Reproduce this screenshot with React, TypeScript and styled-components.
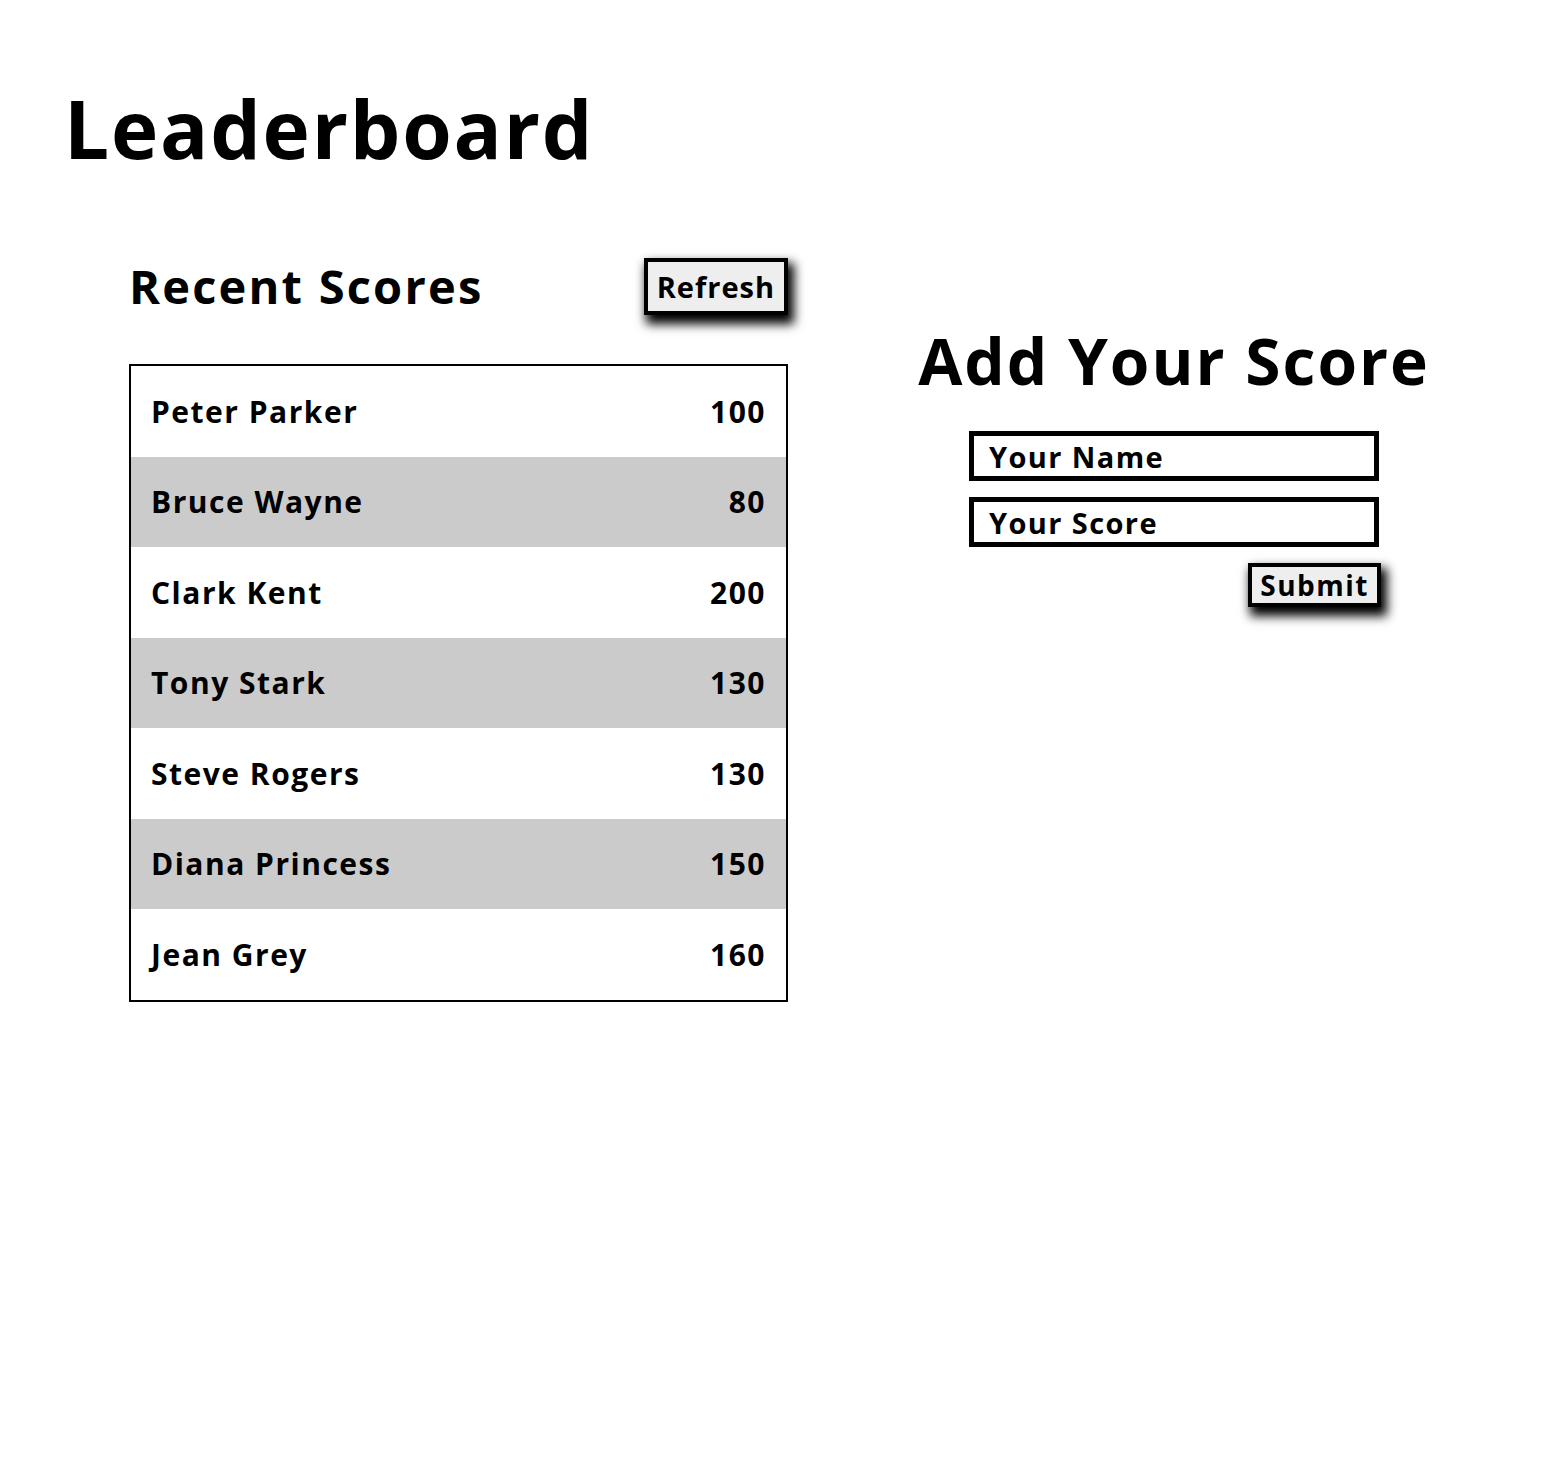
import styled, { createGlobalStyle } from 'styled-components';

const GlobalStyle = createGlobalStyle`
  body {
    margin: 0;
    background: #fff;
    color: #000;
    font-family: 'Open Sans', 'DejaVu Sans', sans-serif;
  }
`;

const Page = styled.div`
  padding: 78px 0 0 64px;
  min-height: 1460px;
  box-sizing: border-box;
`;

const Title = styled.h1`
  margin: 0;
  font-size: 80px;
  line-height: 100px;
  font-weight: 700;
  letter-spacing: 1.8px;
`;

const Columns = styled.div`
  display: flex;
  align-items: flex-start;
  margin-top: 78px;
`;

const ScoresColumn = styled.section`
  width: 659px;
  margin-left: 65px;
`;

const ScoresHeader = styled.div`
  display: flex;
  justify-content: space-between;
  align-items: center;
`;

const SubTitle = styled.h2`
  margin: 0;
  font-size: 47px;
  line-height: 60px;
  font-weight: 700;
  letter-spacing: 2.2px;
`;

const ShadowButton = styled.button<{ $size: 'big' | 'small' }>`
  font-family: inherit;
  font-weight: 700;
  font-size: ${(p) => (p.$size === 'big' ? '29px' : '28px')};
  letter-spacing: ${(p) => (p.$size === 'big' ? '1px' : '1.5px')};
  line-height: 1;
  color: #000;
  background: #eee;
  border: 4px solid #000;
  padding: ${(p) => (p.$size === 'big' ? '10px 9px' : '4px 8px')};
  box-shadow: 4px 7px 10px 2px #000;
  cursor: pointer;
`;

const Table = styled.div`
  margin-top: 48px;
  border: 2px solid #000;
`;

const Row = styled.div<{ $shaded: boolean }>`
  display: flex;
  justify-content: space-between;
  align-items: center;
  height: 90.5px;
  padding: 0 20px;
  background: ${(p) => (p.$shaded ? '#cbcbcb' : '#fff')};
  font-size: 30px;
  font-weight: 700;
  letter-spacing: 1.5px;
`;

const FormColumn = styled.section`
  width: 546px;
  margin-left: 113px;
  margin-top: 65px;
  display: flex;
  flex-direction: column;
  align-items: center;
`;

const FormTitle = styled.h2`
  margin: 0 0 30px;
  font-size: 64px;
  line-height: 80px;
  font-weight: 700;
  letter-spacing: 2px;
`;

const Form = styled.form`
  width: 410px;
  display: flex;
  flex-direction: column;
  gap: 16px;
`;

const Input = styled.input`
  box-sizing: border-box;
  width: 100%;
  height: 50px;
  border: 5px solid #000;
  padding: 0 15px;
  font-family: inherit;
  font-size: 29px;
  font-weight: 700;
  letter-spacing: 1.4px;
  color: #000;
  outline: none;
  &::placeholder {
    color: #000;
  }
`;

const SubmitRow = styled.div`
  display: flex;
  justify-content: flex-end;
  margin-right: -2px;
`;

const scores = [
  { name: 'Peter Parker', score: 100 },
  { name: 'Bruce Wayne', score: 80 },
  { name: 'Clark Kent', score: 200 },
  { name: 'Tony Stark', score: 130 },
  { name: 'Steve Rogers', score: 130 },
  { name: 'Diana Princess', score: 150 },
  { name: 'Jean Grey', score: 160 },
];

export default function App() {
  return (
    <Page>
      <GlobalStyle />
      <Title>Leaderboard</Title>
      <Columns>
        <ScoresColumn>
          <ScoresHeader>
            <SubTitle>Recent Scores</SubTitle>
            <ShadowButton $size="big">Refresh</ShadowButton>
          </ScoresHeader>
          <Table>
            {scores.map((s, i) => (
              <Row key={s.name} $shaded={i % 2 === 1}>
                <span>{s.name}</span>
                <span>{s.score}</span>
              </Row>
            ))}
          </Table>
        </ScoresColumn>
        <FormColumn>
          <FormTitle>Add Your Score</FormTitle>
          <Form onSubmit={(e) => e.preventDefault()}>
            <Input placeholder="Your Name" />
            <Input placeholder="Your Score" />
            <SubmitRow>
              <ShadowButton $size="small" type="submit">
                Submit
              </ShadowButton>
            </SubmitRow>
          </Form>
        </FormColumn>
      </Columns>
    </Page>
  );
}
